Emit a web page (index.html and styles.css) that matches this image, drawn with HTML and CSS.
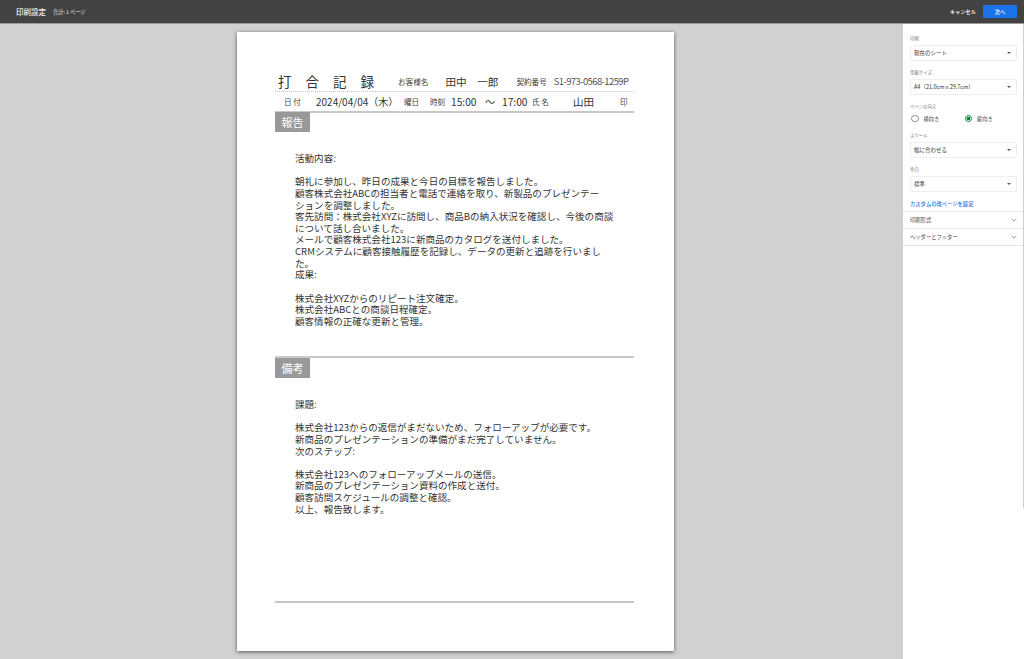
FILE: index.html
```html
<!DOCTYPE html>
<html lang="ja">
<head>
  <meta charset="UTF-8" />
  <title>印刷設定</title>
  <link rel="stylesheet" href="styles.css">
</head>
<body>

  <header class="topbar">
    <div class="topbar-title">印刷設定</div>
    <div class="topbar-count">合計: 1 ページ</div>
    <div class="topbar-cancel">キャンセル</div>
    <button class="topbar-next">次へ</button>
  </header>

  <div class="workspace">
    <main class="preview">
      <div class="paper">
        <div class="head-row">
          <div class="doc-title">打 合 記 録</div>
          <div class="lbl client-lbl">お客様名</div>
          <div class="client">田中　一郎</div>
          <div class="lbl contract-lbl">契約番号</div>
          <div class="contract">S1-973-0568-1259P</div>
        </div>
        <div class="info-row">
          <div class="lbl date-lbl">日 付</div>
          <div class="val date">2024/04/04（木）</div>
          <div class="lbl day-lbl">曜日</div>
          <div class="lbl time-lbl">時刻</div>
          <div class="val from">15:00</div>
          <div class="val tilde">～</div>
          <div class="val to">17:00</div>
          <div class="lbl name-lbl">氏 名</div>
          <div class="val staff">山田</div>
          <div class="lbl seal">印</div>
        </div>

        <section class="block report">
          <h2 class="block-tag">報告</h2>
          <div class="block-text">活動内容:

朝礼に参加し、昨日の成果と今日の目標を報告しました。
顧客株式会社ABCの担当者と電話で連絡を取り、新製品のプレゼンテー
ションを調整しました。
客先訪問：株式会社XYZに訪問し、商品Bの納入状況を確認し、今後の商談
について話し合いました。
メールで顧客株式会社123に新商品のカタログを送付しました。
CRMシステムに顧客接触履歴を記録し、データの更新と追跡を行いまし
た。
成果:

株式会社XYZからのリピート注文確定。
株式会社ABCとの商談日程確定。
顧客情報の正確な更新と管理。</div>
        </section>

        <section class="block notes">
          <h2 class="block-tag">備考</h2>
          <div class="block-text">課題:

株式会社123からの返信がまだないため、フォローアップが必要です。
新商品のプレゼンテーションの準備がまだ完了していません。
次のステップ:

株式会社123へのフォローアップメールの送信。
新商品のプレゼンテーション資料の作成と送付。
顧客訪問スケジュールの調整と確認。
以上、報告致します。</div>
        </section>

        <div class="end-rule"></div>
      </div>
    </main>

    <aside class="sidebar">
      <div class="settings">
        <div class="field">
          <div class="field-label">印刷</div>
          <div class="select"><span>現在のシート</span><i class="caret"></i></div>
        </div>
        <div class="field">
          <div class="field-label">用紙サイズ</div>
          <div class="select"><span>A4（21.0cm x 29.7cm）</span><i class="caret"></i></div>
        </div>
        <div class="field">
          <div class="field-label">ページの向き</div>
          <div class="radios">
            <div class="radio-item"><i class="radio"></i>横向き</div>
            <div class="radio-item"><i class="radio on"></i>縦向き</div>
          </div>
        </div>
        <div class="field">
          <div class="field-label">スケール</div>
          <div class="select"><span>幅に合わせる</span><i class="caret"></i></div>
        </div>
        <div class="field">
          <div class="field-label">余白</div>
          <div class="select"><span>標準</span><i class="caret"></i></div>
        </div>
        <div class="custom-link">カスタムの改ページを設定</div>
      </div>
      <div class="fold">
        <span>印刷形式</span>
        <svg class="chev" viewBox="0 0 10 6"><path d="M1 1l4 4 4-4" /></svg>
      </div>
      <div class="fold">
        <span>ヘッダーとフッター</span>
        <svg class="chev" viewBox="0 0 10 6"><path d="M1 1l4 4 4-4" /></svg>
      </div>
    </aside>
  </div>

</body>
</html>
```

FILE: styles.css
```css
html, body {
  margin: 0;
  padding: 0;
  height: 659px;
  overflow: hidden;
  font-family: "Noto Sans CJK JP", "Noto Sans", sans-serif;
  background: #d1d1d1;
  color: #333;
}

.topbar {
  height: 24px;
  box-sizing: border-box;
  display: flex;
  align-items: center;
  background: #424242;
  border-bottom: 1px solid #9a9a9a;
  color: #fff;
  padding: 0 7px 0 16px;
}

.topbar-title {
  font-size: 7.5px;
  color: #eee;
  font-weight: 500;
}

.topbar-count {
  font-size: 5.2px;
  margin-left: 7px;
  color: #e4e4e4;
}

.topbar-cancel {
  margin-left: auto;
  font-size: 5.2px;
  font-weight: 500;
}

.topbar-next {
  margin-left: 7px;
  width: 34px;
  height: 13px;
  padding: 0;
  border: none;
  border-radius: 1px;
  background: #1a73e8;
  color: #fff;
  font-family: inherit;
  font-size: 5.2px;
  font-weight: 500;
}

.workspace {
  display: flex;
  height: 635px;
}

.preview {
  width: 903px;
  box-sizing: border-box;
  padding: 8px 0 0 237px;
}

.paper {
  width: 437px;
  height: 619px;
  box-sizing: border-box;
  padding: 40px 40px 0 38px;
  background: #fff;
  box-shadow: 0 1px 4px rgba(0, 0, 0, 0.6);
  color: #333;
}

.head-row {
  display: flex;
  align-items: center;
  height: 20px;
  padding-bottom: 1px;
  box-sizing: border-box;
  border-bottom: 1px dotted #c4c4c4;
}

.doc-title {
  width: 120px;
  padding-left: 3px;
  font-size: 13.5px;
  word-spacing: 11px;
  white-space: nowrap;
}

.lbl {
  font-size: 7.6px;
  white-space: nowrap;
  color: #444;
}

.client {
  font-size: 10.6px;
  margin-left: 17px;
  width: 71px;
  white-space: nowrap;
}

.contract {
  font-size: 9.5px;
  letter-spacing: -0.6px;
  margin-left: 7px;
  white-space: nowrap;
  color: #555;
}

.info-row {
  display: flex;
  align-items: center;
  height: 19px;
}

.val {
  font-size: 10px;
  white-space: nowrap;
}

.date-lbl { margin-left: 9px; width: 32px; }
.date { width: 88px; }
.day-lbl { width: 26px; }
.time-lbl { width: 21px; }
.from { width: 34px; font-size: 10.2px; }
.tilde { width: 17px; }
.to { width: 30px; font-size: 10.2px; }
.name-lbl { width: 22px; }
.staff { width: 40px; font-size: 10.5px; text-align: right; }
.seal { margin-left: 26px; }

.block {
  border-top: 2px solid #c8c8c8;
  height: 243px;
}

.report .block-tag {
  margin-top: -1px;
}

.block-tag {
  width: 35px;
  height: 20px;
  margin: 0;
  background: #999;
  color: #fff;
  font-size: 11px;
  font-weight: 400;
  line-height: 20px;
  text-align: center;
}

.block-text {
  padding-left: 20px;
  margin-top: 21px;
  font-size: 9.55px;
  line-height: 11.62px;
  white-space: pre-line;
}

.end-rule {
  border-top: 2px solid #c8c8c8;
}

.sidebar {
  position: relative;
  width: 121px;
  background: #fff;
  color: #444;
}

/* scrollbar thumb on the panel edge */
.sidebar::after {
  content: "";
  position: absolute;
  top: 0;
  right: 0;
  width: 1px;
  height: 484px;
  background: #cfcfcf;
}

.settings {
  padding: 11px 7px 0 7px;
  border-bottom: 1px solid #e4e4e4;
  height: 188px;
  box-sizing: border-box;
}

.field {
  margin-bottom: 8px;
}

.field-label {
  font-size: 4.4px;
  line-height: 7px;
  color: #777;
  margin-bottom: 3px;
}

.select {
  height: 16px;
  box-sizing: border-box;
  display: flex;
  align-items: center;
  justify-content: space-between;
  padding: 0 5px 0 3px;
  border: 1px solid #eee;
  border-radius: 2px;
  font-size: 5.5px;
  color: #333;
}

.caret {
  width: 0;
  height: 0;
  border-left: 2px solid transparent;
  border-right: 2px solid transparent;
  border-top: 2px solid #555;
}

.radios {
  display: flex;
  font-size: 5.2px;
  color: #444;
}

.radio-item {
  display: flex;
  align-items: center;
  gap: 5px;
  width: 54px;
  height: 11px;
  padding-left: 1px;
}

.radio {
  width: 5.5px;
  height: 5.5px;
  box-sizing: content-box;
  border: 0.5px solid #888;
  border-radius: 50%;
}

.radio.on {
  border-color: #188038;
  background: radial-gradient(circle, #188038 0 1.7px, #fff 2.1px);
}

.custom-link {
  font-size: 5.3px;
  font-weight: 500;
  line-height: 8px;
  color: #1a73e8;
  margin-top: 5px;
}

.fold {
  height: 17px;
  box-sizing: border-box;
  display: flex;
  align-items: center;
  justify-content: space-between;
  padding: 0 7px;
  border-bottom: 1px solid #e4e4e4;
  font-size: 5.3px;
  color: #444;
}

.chev {
  width: 6px;
  height: 4px;
  fill: none;
  stroke: #777;
  stroke-width: 1.2;
}
```
